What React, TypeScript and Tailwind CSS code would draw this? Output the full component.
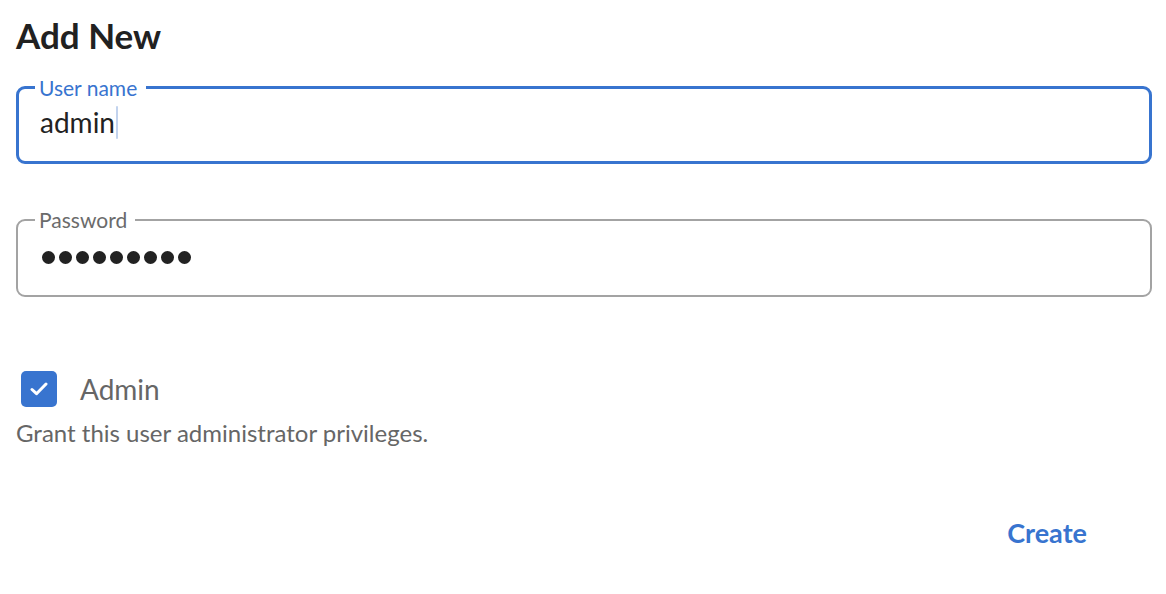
import { useState } from "react"

const blue = "#3874cf"

export default function App() {
  const [admin, setAdmin] = useState(true)

  return (
    <div className="w-[1166px] h-[594px] bg-white px-4 font-['Lato',sans-serif] text-[#222]">
      <h2 className="pt-[14px] text-[35px] font-bold leading-[42px] text-[#212121]">Add New</h2>

      {/* user name, focused */}
      <fieldset className="mt-[19px] w-[1136px] h-[89px] rounded-[9px] border-[3px] border-[#3874cf] p-0">
        <legend className="ml-[16px] pl-[4px] pr-[9px] text-[21px] leading-[25px] text-[#3874cf]">User name</legend>
        <div className="flex items-center pl-[21px] pt-[5px]">
          <span className="text-[28px] leading-[34px] text-[#222]">admin</span>
          <span className="ml-[1px] w-[2px] h-[33px] rounded-full bg-[#c2d3ee]" />
        </div>
      </fieldset>

      {/* password */}
      <fieldset className="mt-[43px] w-[1136px] h-[90px] rounded-[9px] border-2 border-[#a3a3a3] p-0">
        <legend className="ml-[17px] pl-[4px] pr-[8px] text-[21px] leading-[25px] text-[#6b6b6b]">Password</legend>
        <div className="flex items-center gap-[4px] pl-[24px] pt-[19px]">
          {Array.from({ length: 9 }).map((_, i) => (
            <span key={i} className="w-[13px] h-[13px] rounded-full bg-[#222]" />
          ))}
        </div>
      </fieldset>

      <div className="mt-[74px] flex items-center">
        <button
          onClick={() => setAdmin(v => !v)}
          className="ml-[5px] w-[36px] h-[36px] rounded-[5px] flex items-center justify-center"
          style={{ background: admin ? blue : "#fff" }}
        >
          {admin && (
            <svg width="18" height="14" viewBox="0 0 18 14" fill="none">
              <path d="M2 7.5l4.5 4.2L16 2" stroke="#fff" strokeWidth="3" strokeLinecap="round" strokeLinejoin="round" />
            </svg>
          )}
        </button>
        <span className="ml-[23px] text-[28px] leading-[36px] text-[#666]">Admin</span>
      </div>
      <p className="mt-[11px] text-[24px] leading-[29px] text-[#666]">Grant this user administrator privileges.</p>

      <div className="mt-[70px] flex justify-end pr-[63px]">
        <button className="text-[27px] font-bold leading-[32px] text-[#3874cf]">Create</button>
      </div>
    </div>
  )
}
